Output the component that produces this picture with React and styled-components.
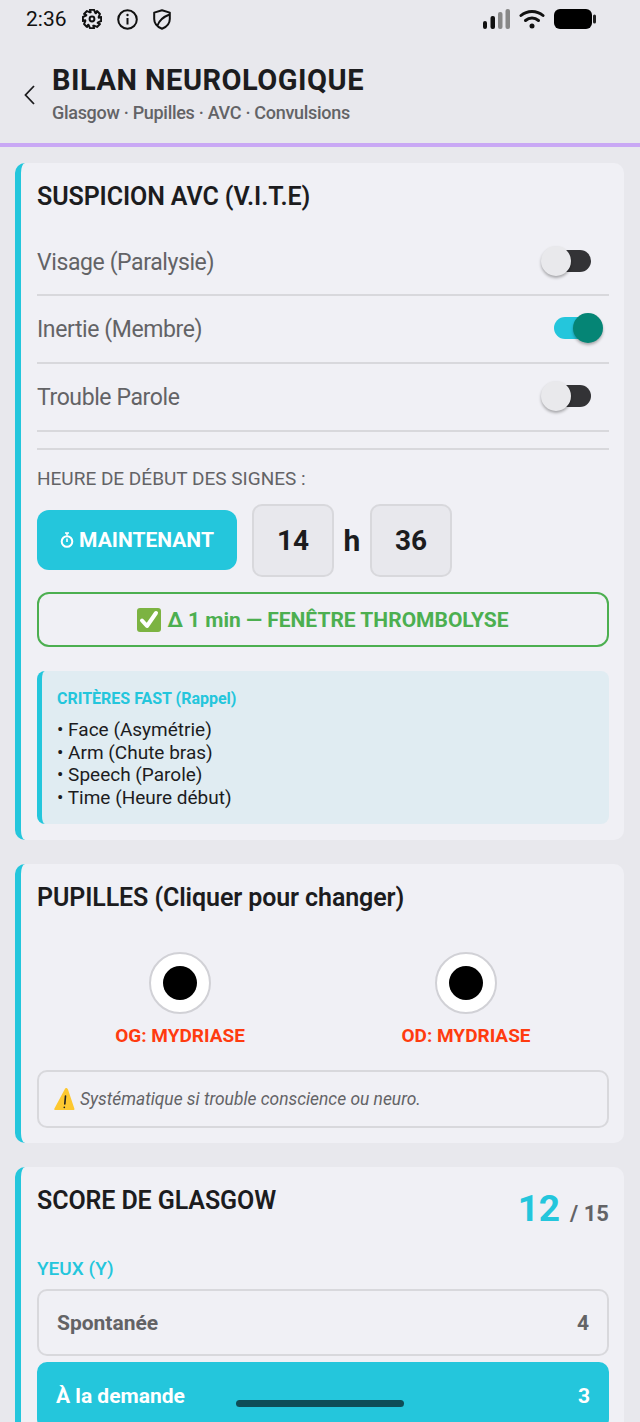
import React from "react";
import styled, { createGlobalStyle } from "styled-components";

const GlobalStyle = createGlobalStyle`
  html, body { margin: 0; padding: 0; background: #e8e8ed; }
  * { box-sizing: border-box; }
  body { font-family: Roboto, "Liberation Sans", sans-serif; }
`;

const Screen = styled.div`
  position: relative;
  width: 640px;
  height: 1422px;
  overflow: hidden;
  background: #e8e8ed;
`;

const StatusBar = styled.div`
  height: 38px;
  padding: 0 44px 0 26px;
  display: flex;
  align-items: center;
  color: #111;
`;

const Clock = styled.span`
  font-size: 21px;
`;

const StatusLeft = styled.div`
  display: flex;
  align-items: center;
  gap: 15px;
`;

const StatusRight = styled.div`
  margin-left: auto;
  display: flex;
  align-items: center;
  gap: 9px;
`;

const Header = styled.header`
  height: 109px;
  padding: 25px 0 0 22px;
  display: flex;
  border-bottom: 4px solid #c9a8f5;
`;

const Back = styled.svg`
  width: 14px;
  height: 20px;
  margin-top: 22px;
  margin-right: 16px;
  flex: none;
`;

const Title = styled.h1`
  margin: 0;
  font-size: 29px;
  line-height: 34px;
  font-weight: 700;
  letter-spacing: 0.5px;
  color: #1c1c1e;
`;

const Subtitle = styled.div`
  margin-top: 5px;
  font-size: 18px;
  line-height: 22px;
  font-weight: 500;
  letter-spacing: -0.3px;
  color: #636366;
`;

const Content = styled.main`
  padding: 16px 16px 0 15px;
  display: flex;
  flex-direction: column;
  gap: 24px;
`;

const Card = styled.section`
  background: #f0f0f5;
  border-left: 6px solid #24c6dc;
  border-radius: 10px;
  padding: 17px 15px 15px 16px;
`;

const CardTitle = styled.h2`
  margin: 0;
  font-size: 25px;
  line-height: 34px;
  font-weight: 600;
  letter-spacing: -0.1px;
  color: #1c1c1e;
`;

const ToggleList = styled.div`
  margin-top: 16px;
`;

const ToggleRow = styled.div`
  height: ${(p) => p.$h}px;
  display: flex;
  align-items: center;
  justify-content: space-between;
  border-bottom: 2px solid #d8d8dc;
  font-size: 23px;
  letter-spacing: -0.4px;
  color: #636366;
`;

const Track = styled.div`
  position: relative;
  width: 37px;
  height: 22px;
  margin-right: 18px;
  margin-bottom: 2px;
  border-radius: 11px;
  background: ${(p) => (p.$on ? "#24c6dc" : "#333336")};
`;

const Thumb = styled.div`
  position: absolute;
  top: -4px;
  width: 30px;
  height: 30px;
  border-radius: 50%;
  ${(p) => (p.$on ? "right: -12px; background: #058575;" : "left: -13px; background: #e9e9ec;")}
  box-shadow: 0 2px 3px rgba(0, 0, 0, 0.3);
`;

const Divider = styled.hr`
  margin: 16px 0 0;
  border: 0;
  border-top: 2px solid #d8d8dc;
`;

const TimeLabel = styled.div`
  margin-top: 18px;
  font-size: 19px;
  line-height: 22px;
  color: #636366;
`;

const TimeRow = styled.div`
  margin-top: 14px;
  display: flex;
  align-items: center;
`;

const NowButton = styled.button`
  width: 200px;
  height: 60px;
  margin-bottom: 1px;
  padding: 0;
  border: 0;
  border-radius: 12px;
  background: #24c6dc;
  color: #fff;
  font: 700 21px Roboto, sans-serif;
  display: flex;
  align-items: center;
  justify-content: center;
  gap: 5px;
`;

const TimeBox = styled.div`
  width: 82px;
  height: 73px;
  border: 2px solid #d8d8dc;
  border-radius: 10px;
  background: #e8e8ed;
  font-size: 28px;
  font-weight: 700;
  color: #1c1c1e;
  display: flex;
  align-items: center;
  justify-content: center;
`;

const FirstBox = styled(TimeBox)`
  margin-left: 15px;
`;

const HourSep = styled.span`
  width: 36px;
  text-align: center;
  font-size: 30px;
  font-weight: 700;
  color: #1c1c1e;
`;

const DeltaBox = styled.div`
  margin-top: 15px;
  height: 55px;
  border: 2px solid #4caf50;
  border-radius: 12px;
  color: #4caf50;
  font-size: 21px;
  font-weight: 700;
  display: flex;
  align-items: center;
  justify-content: center;
  gap: 6px;
`;

const FastBox = styled.div`
  margin-top: 24px;
  margin-bottom: 1px;
  height: 153px;
  border-left: 5px solid #24c6dc;
  border-radius: 8px;
  background: #e0ecf2;
  padding: 17px 15px;
`;

const FastTitle = styled.div`
  font-size: 16px;
  line-height: 22px;
  font-weight: 700;
  color: #24c6dc;
`;

const FastList = styled.div`
  margin-top: 9px;
  font-size: 19px;
  line-height: 22.5px;
  color: #1c1c1e;
`;

const Pupils = styled.div`
  margin-top: 37px;
  display: grid;
  grid-template-columns: 1fr 1fr;
`;

const PupilCol = styled.div`
  display: flex;
  flex-direction: column;
  align-items: center;
`;

const Eye = styled.div`
  width: 62px;
  height: 62px;
  border: 2px solid #d1d1d6;
  border-radius: 50%;
  background: #fff;
  display: flex;
  align-items: center;
  justify-content: center;
`;

const Iris = styled.div`
  width: 34px;
  height: 34px;
  border-radius: 50%;
  background: #000;
`;

const PupilLabel = styled.div`
  margin-top: 9px;
  font-size: 19px;
  line-height: 26px;
  font-weight: 700;
  color: #ff3b0f;
`;

const Note = styled.div`
  margin-top: 21px;
  height: 58px;
  border: 2px solid #d8d8dc;
  border-radius: 10px;
  padding: 0 15px;
  display: flex;
  align-items: center;
  gap: 5px;
  font-size: 17.4px;
  font-style: italic;
  color: #636366;
`;

const ScoreHead = styled.div`
  display: flex;
  justify-content: space-between;
  align-items: flex-start;
`;

const Score = styled.div`
  margin-top: 4px;
  display: flex;
  align-items: baseline;
  gap: 10px;
  font-size: 22px;
  font-weight: 700;
  color: #636366;
`;

const ScoreValue = styled.span`
  font-size: 37px;
  line-height: 42px;
  color: #24c6dc;
`;

const GroupLabel = styled.div`
  margin-top: 27px;
  font-size: 19px;
  line-height: 24px;
  font-weight: 500;
  color: #24c6dc;
`;

const Option = styled.div`
  height: 67px;
  margin-top: ${(p) => (p.$first ? 8 : 6)}px;
  padding: 0 ${(p) => (p.$active ? 17 : 18)}px;
  display: flex;
  align-items: center;
  justify-content: space-between;
  border: 2px solid ${(p) => (p.$active ? "#24c6dc" : "#d8d8dc")};
  border-radius: 10px;
  background: ${(p) => (p.$active ? "#24c6dc" : "transparent")};
  color: ${(p) => (p.$active ? "#fff" : "#636366")};
  font-size: 21px;
  font-weight: 700;
`;

const HomeBar = styled.div`
  position: absolute;
  left: 236px;
  bottom: 15px;
  width: 168px;
  height: 7px;
  border-radius: 4px;
  background: #0e4d57;
`;

const gearPath = () => {
  const pts = [];
  for (let i = 0; i < 8; i++) {
    const a = (i * Math.PI) / 4;
    [-0.22, 0.22].forEach((d) => pts.push([9.4, a + d]));
    [0.5, 0.6].forEach((d) => pts.push([6.9, a + d]));
  }
  return (
    pts
      .map(([r, a], i) => `${i ? "L" : "M"}${(10 + r * Math.cos(a)).toFixed(2)} ${(10 + r * Math.sin(a)).toFixed(2)}`)
      .join(" ") + "Z"
  );
};

const Gear = () => (
  <svg width="20" height="20" viewBox="0 0 20 20" fill="none" stroke="#111" strokeWidth="2" strokeLinejoin="round">
    <path d={gearPath()} />
    <circle cx="10" cy="10" r="2.400" />
  </svg>
);

const InfoIcon = () => (
  <svg width="21" height="21" viewBox="0 0 21 21" fill="none" stroke="#111" strokeWidth="2">
    <circle cx="10.500" cy="10.500" r="9.300" />
    <path d="M10.500 9v6.500" />
    <circle cx="10.500" cy="6" r="1.200" fill="#111" stroke="none" />
  </svg>
);

const Shield = () => (
  <svg width="18" height="21" viewBox="0 0 18 21" fill="none" stroke="#111" strokeWidth="2" strokeLinejoin="round">
    <path d="M9 1.200 1.200 3.600v6.400c0 4.600 3.300 8 7.800 9.800 4.500-1.800 7.800-5.200 7.800-9.800V3.600z" />
    <path d="M4.500 16.500C6 12 10 8 16.500 5.500" />
  </svg>
);

const Signal = () => (
  <svg width="27" height="20" viewBox="0 0 27 20">
    <rect x="0" y="12" width="4" height="8" rx="2" fill="#111" />
    <rect x="7.500" y="7" width="4.500" height="13" rx="2" fill="#111" />
    <rect x="15" y="3" width="4.500" height="17" rx="2" fill="#888" />
    <rect x="22.500" y="0" width="4.500" height="20" rx="2" fill="#888" />
  </svg>
);

const Wifi = () => (
  <svg width="26" height="20" viewBox="0 0 26 20" fill="none" stroke="#111" strokeWidth="3" strokeLinecap="round">
    <path d="M2 6.500c6.200-5.500 15.800-5.500 22 0" />
    <path d="M6.500 11.500c3.800-3.200 9.200-3.200 13 0" />
    <circle cx="13" cy="17" r="2.500" fill="#111" stroke="none" />
  </svg>
);

const Battery = () => (
  <svg width="42" height="20" viewBox="0 0 42 20">
    <rect x="0" y="0" width="38" height="20" rx="6" fill="#000" />
    <rect x="39" y="5.500" width="3" height="9" rx="1.500" fill="#222" />
  </svg>
);

const Stopwatch = () => (
  <svg width="14" height="16" viewBox="0 0 14 16" fill="none" stroke="#fff" strokeWidth="2">
    <circle cx="7" cy="9.500" r="5.300" />
    <path d="M5 1h4M7 1v2.500M7 6.500v3.500" strokeWidth="1.600" />
  </svg>
);

const CheckEmoji = () => (
  <svg width="24" height="24" viewBox="0 0 24 24">
    <rect x="0" y="0" width="24" height="24" rx="3" fill="#7cb342" />
    <path d="M5 12.500 10 18 19 5" fill="none" stroke="#fff" strokeWidth="4" strokeLinecap="round" strokeLinejoin="round" />
  </svg>
);

const WarnEmoji = () => (
  <svg width="21" height="24" viewBox="0 0 21 24">
    <path d="M12 1c1 0 1.500 .5 2 1.500L20.500 22c0 .7-.5 1-1 1H1c-.7 0-1-.5-.7-1.200L11 1.800c.2-.5 .6-.8 1-.8z" fill="#fdc830" />
    <path d="M11.500 9 10.800 17M10.300 20.200v.3" stroke="#222" strokeWidth="1.600" fill="none" strokeLinecap="round" />
  </svg>
);

const toggles = [
  { label: "Visage (Paralysie)", on: false, h: 66 },
  { label: "Inertie (Membre)", on: true, h: 68 },
  { label: "Trouble Parole", on: false, h: 68 },
];

const App = () => (
  <Screen>
    <GlobalStyle />
    <StatusBar>
      <StatusLeft>
        <Clock>2:36</Clock>
        <Gear />
        <InfoIcon />
        <Shield />
      </StatusLeft>
      <StatusRight>
        <Signal />
        <Wifi />
        <Battery />
      </StatusRight>
    </StatusBar>
    <Header>
      <Back viewBox="0 0 14 20" fill="none" stroke="#1c1c1e" strokeWidth="1.800">
        <path d="M12 1 3.500 10 12 19" />
      </Back>
      <div>
        <Title>BILAN NEUROLOGIQUE</Title>
        <Subtitle>Glasgow · Pupilles · AVC · Convulsions</Subtitle>
      </div>
    </Header>
    <Content>
      <Card>
        <CardTitle>SUSPICION AVC (V.I.T.E)</CardTitle>
        <ToggleList>
          {toggles.map((t) => (
            <ToggleRow key={t.label} $h={t.h}>
              {t.label}
              <Track $on={t.on}>
                <Thumb $on={t.on} />
              </Track>
            </ToggleRow>
          ))}
        </ToggleList>
        <Divider />
        <TimeLabel>HEURE DE DÉBUT DES SIGNES :</TimeLabel>
        <TimeRow>
          <NowButton>
            <Stopwatch />
            MAINTENANT
          </NowButton>
          <FirstBox>14</FirstBox>
          <HourSep>h</HourSep>
          <TimeBox>36</TimeBox>
        </TimeRow>
        <DeltaBox>
          <CheckEmoji />
          Δ 1 min — FENÊTRE THROMBOLYSE
        </DeltaBox>
        <FastBox>
          <FastTitle>CRITÈRES FAST (Rappel)</FastTitle>
          <FastList>
            <div>• Face (Asymétrie)</div>
            <div>• Arm (Chute bras)</div>
            <div>• Speech (Parole)</div>
            <div>• Time (Heure début)</div>
          </FastList>
        </FastBox>
      </Card>
      <Card>
        <CardTitle>PUPILLES (Cliquer pour changer)</CardTitle>
        <Pupils>
          <PupilCol>
            <Eye>
              <Iris />
            </Eye>
            <PupilLabel>OG: MYDRIASE</PupilLabel>
          </PupilCol>
          <PupilCol>
            <Eye>
              <Iris />
            </Eye>
            <PupilLabel>OD: MYDRIASE</PupilLabel>
          </PupilCol>
        </Pupils>
        <Note>
          <WarnEmoji />
          Systématique si trouble conscience ou neuro.
        </Note>
      </Card>
      <Card>
        <ScoreHead>
          <CardTitle>SCORE DE GLASGOW</CardTitle>
          <Score>
            <ScoreValue>12</ScoreValue>/ 15
          </Score>
        </ScoreHead>
        <GroupLabel>YEUX (Y)</GroupLabel>
        <Option $first>
          <span>Spontanée</span>
          <span>4</span>
        </Option>
        <Option $active>
          <span>À la demande</span>
          <span>3</span>
        </Option>
      </Card>
    </Content>
    <HomeBar />
  </Screen>
);

export default App;
